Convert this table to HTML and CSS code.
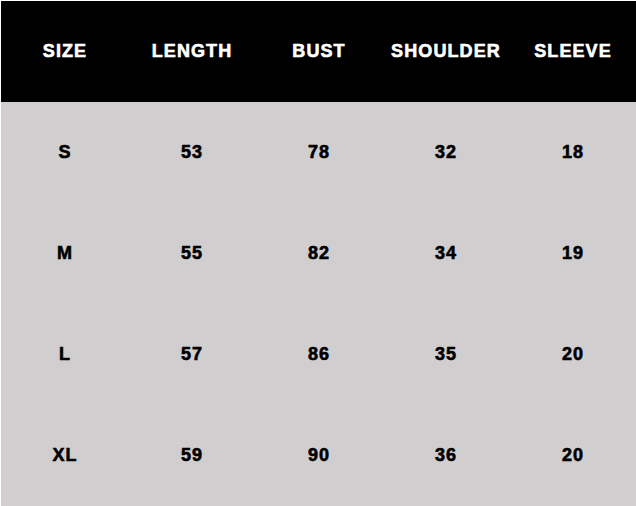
FILE: index.html
```html
<!DOCTYPE html>
<html>
<head>
<meta charset="utf-8">
<link rel="stylesheet" href="styles.css">
</head>
<body>
<div class="chart">
  <div class="row head">
    <div class="cell">SIZE</div>
    <div class="cell">LENGTH</div>
    <div class="cell">BUST</div>
    <div class="cell">SHOULDER</div>
    <div class="cell">SLEEVE</div>
  </div>
  <div class="row">
    <div class="cell">S</div><div class="cell">53</div><div class="cell">78</div><div class="cell">32</div><div class="cell">18</div>
  </div>
  <div class="row">
    <div class="cell">M</div><div class="cell">55</div><div class="cell">82</div><div class="cell">34</div><div class="cell">19</div>
  </div>
  <div class="row">
    <div class="cell">L</div><div class="cell">57</div><div class="cell">86</div><div class="cell">35</div><div class="cell">20</div>
  </div>
  <div class="row">
    <div class="cell">XL</div><div class="cell">59</div><div class="cell">90</div><div class="cell">36</div><div class="cell">20</div>
  </div>
</div>
</body>
</html>
```
FILE: styles.css
```css
html, body {
  margin: 0;
  padding: 0;
  background: #ffffff;
}
.chart {
  width: 635px;
  border-top: 1px solid #ffffff;
  border-left: 1px solid #ffffff;
  background: #d0cecf;
  font-family: "Liberation Sans", Arial, sans-serif;
  font-weight: bold;
  font-size: 18px;
  letter-spacing: 1.1px;
  -webkit-text-stroke: 0.6px currentColor;
  color: #000;
}
.row {
  display: grid;
  grid-template-columns: repeat(5, 127px);
  height: 101px;
}
.cell {
  display: flex;
  align-items: center;
  justify-content: center;
  padding-left: 1px;
}
.head {
  background: #000;
  color: #fff;
}
```
